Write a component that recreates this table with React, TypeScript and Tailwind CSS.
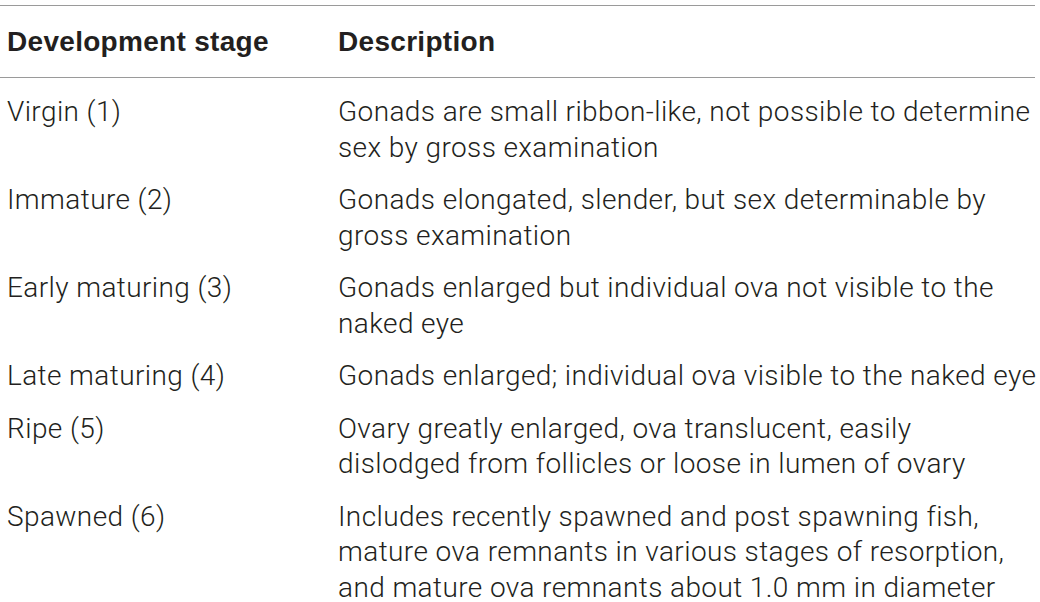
const rows = [
  {
    stage: "Virgin (1)",
    lines: ["Gonads are small ribbon-like, not possible to determine", "sex by gross examination"],
  },
  {
    stage: "Immature (2)",
    lines: ["Gonads elongated, slender, but sex determinable by", "gross examination"],
  },
  {
    stage: "Early maturing (3)",
    lines: ["Gonads enlarged but individual ova not visible to the", "naked eye"],
  },
  {
    stage: "Late maturing (4)",
    lines: ["Gonads enlarged; individual ova visible to the naked eye"],
  },
  {
    stage: "Ripe (5)",
    lines: ["Ovary greatly enlarged, ova translucent, easily", "dislodged from follicles or loose in lumen of ovary"],
  },
  {
    stage: "Spawned (6)",
    lines: [
      "Includes recently spawned and post spawning fish,",
      "mature ova remnants in various stages of resorption,",
      "and mature ova remnants about 1.0 mm in diameter",
    ],
  },
];

export default function App() {
  return (
    <div className="h-[602px] w-[1040px] overflow-hidden bg-white pt-[5px] text-[#231f20]">
      <div className="w-[1035px] border-t border-[#9a9a9a]">
        <div className="grid grid-cols-[331px_1fr] border-b border-[#9a9a9a] px-[7px] pt-[20px] pb-[19px] font-['Liberation_Sans',Arial,sans-serif] text-[28px] leading-[32px] font-bold tracking-[0.3px] whitespace-nowrap">
          <div>Development stage</div>
          <div>Description</div>
        </div>
        <div className="flex flex-col gap-[17px] px-[7px] pt-[16px] font-['Roboto','Liberation_Sans',Arial,sans-serif] text-[28px] leading-[35.5px] font-light tracking-[0.4px] whitespace-nowrap">
          {rows.map((r) => (
            <div key={r.stage} className="grid grid-cols-[331px_1fr]">
              <div>{r.stage}</div>
              <div>
                {r.lines.map((l) => (
                  <div key={l}>{l}</div>
                ))}
              </div>
            </div>
          ))}
        </div>
      </div>
    </div>
  );
}
